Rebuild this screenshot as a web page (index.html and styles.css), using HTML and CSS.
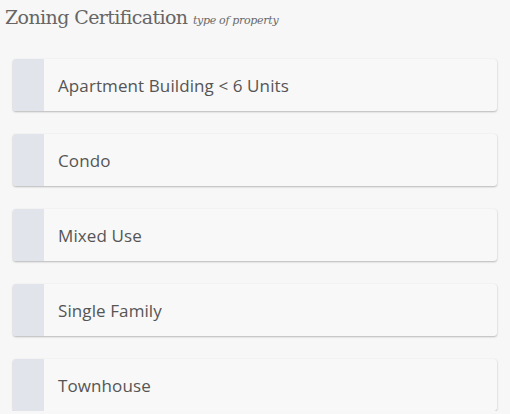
FILE: index.html
```html
<!DOCTYPE html>
<html>
<head>
<meta charset="utf-8">
<link rel="stylesheet" href="styles.css">
</head>
<body>
<div class="page">
  <h1 class="title">Zoning Certification <span class="sub">type of property</span></h1>
  <ul class="options">
    <li class="option"><span class="marker"></span><span class="label">Apartment Building &lt; 6 Units</span></li>
    <li class="option"><span class="marker"></span><span class="label">Condo</span></li>
    <li class="option"><span class="marker"></span><span class="label">Mixed Use</span></li>
    <li class="option"><span class="marker"></span><span class="label">Single Family</span></li>
    <li class="option"><span class="marker"></span><span class="label">Townhouse</span></li>
  </ul>
</div>
</body>
</html>
```
FILE: styles.css
```css
html, body {
  margin: 0;
  padding: 0;
  background: #f7f7f7;
}
.page {
  padding: 3px 13px 0 13px;
  width: 484px;
}
.title {
  margin: 0 0 0 -8px;
  font-family: "DejaVu Serif", "Liberation Serif", serif;
  font-weight: normal;
  font-size: 19px;
  letter-spacing: -0.6px;
  color: #666;
  line-height: 28px;
}
.sub {
  font-style: italic;
  font-size: 11px;
  letter-spacing: -0.3px;
  color: #6a6a6a;
}
.options {
  list-style: none;
  margin: 24px 0 0 0;
  padding: 0;
  display: flex;
  flex-direction: column;
  gap: 23px;
}
.option {
  display: flex;
  align-items: center;
  height: 52px;
  background: #f8f8f8;
  border-radius: 3px;
  box-shadow: 0 1px 2px rgba(0,0,0,0.25), 0 0 1px rgba(0,0,0,0.08);
  overflow: hidden;
}
.marker {
  width: 31px;
  align-self: stretch;
  background: #e1e4ea;
}
.label {
  margin-left: 14px;
  font-family: "Open Sans", sans-serif;
  font-size: 17px;
  letter-spacing: 0.1px;
  color: #555;
}
```
